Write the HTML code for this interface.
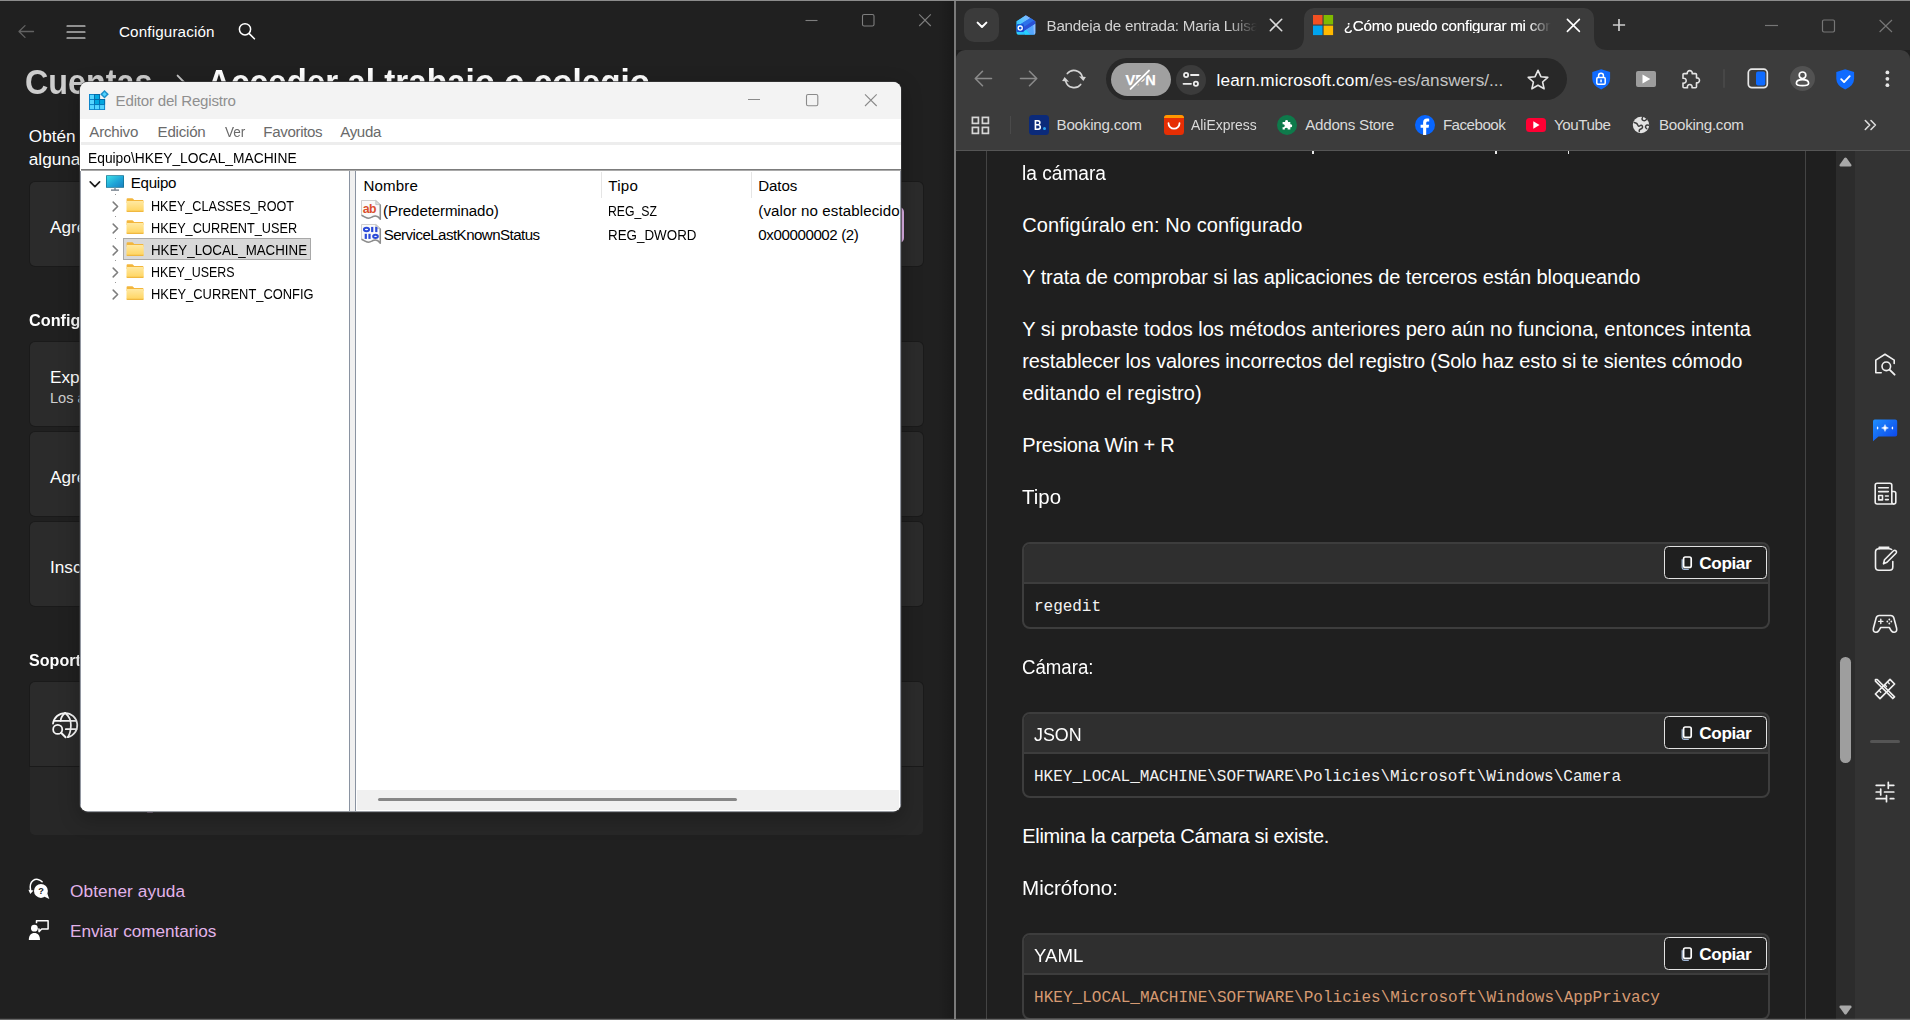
<!DOCTYPE html>
<html lang="es">
<head>
<meta charset="utf-8">
<title>Escritorio</title>
<style>
*{box-sizing:border-box;margin:0;padding:0}
html,body{width:1910px;height:1020px;overflow:hidden;background:#202020;font-family:"Liberation Sans",sans-serif;color:#fff}
.abs{position:absolute}
svg{display:block;overflow:visible}
.t{position:absolute;white-space:pre;line-height:1}
.layer{position:absolute;left:0;top:0;width:1910px;height:1020px}
#settings{clip-path:inset(0 956px 0 0);background:#202020}
#regshadow{position:absolute;left:80px;top:82px;width:821px;height:729.5px;border-radius:8px;box-shadow:0 0 0 1px rgba(58,58,60,.7),0 6px 20px 1px rgba(0,0,0,.26)}
#regedit{clip-path:inset(82px 1009px 208.5px 80px round 8px)}
#browser{clip-path:inset(0 0 0 956px)}
</style>
</head>
<body>
<!-- ============ SETTINGS WINDOW ============ -->
<div id="settings" class="layer">
<svg class="abs" style="left:16px;top:22px;" width="20" height="20" viewBox="0 0 20 20" ><path d="M17.5 9.5H3.2M9 3.6L3 9.5l6 5.9" fill="none" stroke="#626262" stroke-width="1.3" stroke-linecap="round" stroke-linejoin="round"/></svg>
<svg class="abs" style="left:66px;top:22px;" width="20" height="20" viewBox="0 0 20 20" ><path d="M1 4h18M1 10h18M1 16h18" fill="none" stroke="#fff" stroke-width="1.15" stroke-linecap="round"/></svg>
<div id="t0" class="t" style="left:119.00px;top:23.63px;font-size:15.2px;color:#fff;letter-spacing:0.148px;">Configuración</div>
<svg class="abs" style="left:236px;top:20px;" width="22" height="22" viewBox="0 0 22 22" ><circle cx="9" cy="9.3" r="5.6" fill="none" stroke="#fff" stroke-width="1.5"/><path d="M13.2 13.6l5.2 5.2" stroke="#fff" stroke-width="1.6" stroke-linecap="round"/></svg>
<svg class="abs" style="left:800px;top:8px;" width="140" height="24" viewBox="0 0 140 24" ><path d="M5.5 12.5h12" stroke="#7e7e7e" stroke-width="1.1"/><rect x="62.5" y="6.5" width="11.5" height="11.5" rx="1.6" fill="none" stroke="#7e7e7e" stroke-width="1.1"/><path d="M119.2 6.4l11.6 11.6M130.8 6.4l-11.6 11.6" stroke="#7e7e7e" stroke-width="1.1"/></svg>
<div id="t1" class="t" style="left:25.30px;top:63.57px;font-size:35px;color:#cdcdcd;font-weight:bold;transform-origin:0 0;transform:scaleX(0.9233);">Cuentas</div>
<svg class="abs" style="left:175px;top:73px;" width="14" height="22" viewBox="0 0 14 22" ><path d="M2.600 2.600l8.200 8.400-8.200 8.400" fill="none" stroke="#c6c6c6" stroke-width="1.9" stroke-linecap="round" stroke-linejoin="round"/></svg>
<div id="t2" class="t" style="left:207.00px;top:63.57px;font-size:35px;color:#fff;font-weight:bold;transform-origin:0 0;transform:scaleX(0.9490);">Acceder al trabajo o colegio</div>
<div id="t3" class="t" style="left:28.80px;top:127.84px;font-size:17.2px;color:#fff;max-width:840px;overflow:hidden;">Obtén acceso a recursos como el correo electrónico, las aplicaciones y la red.</div>
<div id="t4" class="t" style="left:28.80px;top:151.24px;font-size:17.2px;color:#fff;">algunas cosas de este dispositivo cuando te conectas.</div>
<div class="abs" style="left:30px;top:182px;width:893px;height:84px;background:#2b2b2b;border-radius:5px;box-shadow:0 0 0 1px rgba(0,0,0,.18);"></div>
<div id="t5" class="t" style="left:50.00px;top:218.74px;font-size:17.2px;color:#fff;">Agregar una cuenta profesional o educativa</div>
<div class="abs" style="left:810px;top:207px;width:93.5px;height:36px;background:#e0b2ea;border-radius:5px;"></div>
<div id="t6" class="t" style="left:28.90px;top:311.97px;font-size:17.4px;color:#fff;font-weight:bold;transform-origin:0 0;transform:scaleX(.935);">Configuración relacionada</div>
<div class="abs" style="left:30px;top:342px;width:893px;height:84px;background:#2b2b2b;border-radius:5px;box-shadow:0 0 0 1px rgba(0,0,0,.18);"></div>
<div id="t7" class="t" style="left:50.00px;top:368.74px;font-size:17.2px;color:#fff;">Exportar los archivos de registro de administración</div>
<div id="t8" class="t" style="left:50.00px;top:390.94px;font-size:14.6px;color:#cfcfcf;">Los archivos de registro se exportarán a C:\Users\Public\Documents\MDMDiagnostics</div>
<div class="abs" style="left:30px;top:432px;width:893px;height:84px;background:#2b2b2b;border-radius:5px;box-shadow:0 0 0 1px rgba(0,0,0,.18);"></div>
<div id="t9" class="t" style="left:50.00px;top:468.74px;font-size:17.2px;color:#fff;">Agregar o quitar un paquete de aprovisionamiento</div>
<div class="abs" style="left:30px;top:522px;width:893px;height:84px;background:#2b2b2b;border-radius:5px;box-shadow:0 0 0 1px rgba(0,0,0,.18);"></div>
<div id="t10" class="t" style="left:50.00px;top:558.74px;font-size:17.2px;color:#fff;">Inscribirse solo en la administración de dispositivos</div>
<div id="t11" class="t" style="left:28.90px;top:651.97px;font-size:17.4px;color:#fff;font-weight:bold;transform-origin:0 0;transform:scaleX(.925);">Soporte técnico relacionado</div>
<div class="abs" style="left:30px;top:682px;width:893px;height:84px;background:#2b2b2b;border-radius:5px;box-shadow:0 0 0 1px rgba(0,0,0,.18);border-bottom-left-radius:0;border-bottom-right-radius:0;"></div>
<div class="abs" style="left:30px;top:767px;width:893px;height:68px;background:#272727;border-radius:0 0 5px 5px;"></div>
<svg class="abs" style="left:51px;top:712px;" width="28" height="28" viewBox="0 0 28 28" ><g fill="none" stroke="#f6f6f6" stroke-width="1.750" stroke-linecap="round"><path d="M2 11.600A12.200 12.200 0 1 1 17 25.050"/><path d="M3.300 8.800H25.200M14.800 17.200H25.600"/><path d="M14.100 1C18 4 20 9 19.900 13.200S18.600 22.500 16.900 25.200"/><path d="M14.100 1C11.500 3 9.900 6 9.600 8.800"/><circle cx="6.700" cy="17.400" r="4.550"/><path d="M10.100 20.800L14.600 25.300" stroke-width="2"/></g></svg>
<div id="t12" class="t" style="left:98.00px;top:716.74px;font-size:17.2px;color:#fff;">Ayuda con Acceder al trabajo o colegio</div>
<svg class="abs" style="left:28px;top:878px;" width="22" height="22" viewBox="0 0 22 22" ><path d="M14.100 3.800C12 1.200 8 .400 5 2.600C2.400 4.600 1.800 8.500 2.600 12.300" fill="none" stroke="#fff" stroke-width="1.500" stroke-linecap="round"/><path d="M.400 11.700L5.500 12.500L2.300 15.900Z" fill="#fff"/><circle cx="12.950" cy="12.950" r="6.950" fill="#fff"/><path d="M16 18.600L21.300 20.900L19.400 15.800Z" fill="#fff"/><text x="12.950" y="16.300" font-family="Liberation Sans" font-weight="bold" font-size="9.200" text-anchor="middle" fill="#202020">?</text></svg>
<div id="t13" class="t" style="left:70.10px;top:882.64px;font-size:17.2px;color:#e2b3ea;letter-spacing:0.107px;">Obtener ayuda</div>
<svg class="abs" style="left:28px;top:919px;" width="22" height="22" viewBox="0 0 22 22" ><circle cx="6.400" cy="9.200" r="3.400" fill="#fff"/><path d="M.800 20.900c0-4.400 2.200-7 5.600-7s5.600 2.600 5.600 7z" fill="#fff"/><path d="M8.500 4.300V1.800H20.100V10H13.700L11 12.600V10H10.300" fill="none" stroke="#fff" stroke-width="1.500" stroke-linejoin="round"/></svg>
<div id="t14" class="t" style="left:70.10px;top:923.44px;font-size:17.2px;color:#e2b3ea;letter-spacing:-0.053px;">Enviar comentarios</div>
<div class="abs" style="left:146.5px;top:811.5px;width:6px;height:1.8px;background:#d9addf;border-radius:1px;"></div>
<div class="abs" style="left:938px;top:1px;width:16px;height:1018px;background:linear-gradient(90deg,rgba(0,0,0,0),rgba(0,0,0,.2));"></div>
</div>
<!-- ============ REGISTRY EDITOR ============ -->
<div id="regshadow"></div>
<div id="regedit" class="layer">
<div class="abs" style="left:80px;top:82px;width:821px;height:729.5px;background:#fff;"></div>
<div class="abs" style="left:80px;top:82px;width:821px;height:36.7px;background:#f3f3f3;"></div>
<svg class="abs" style="left:89px;top:94px;" width="16" height="16" viewBox="0 0 16 16" ><path d="M0 0H11.050V5.050H16.100V16.100H0Z" fill="#0b82c8"/><path d="M5.050 0H11.050V5.050H16.100V10.600H5.050Z" fill="#0569a6"/><rect x="0.95" y="0.95" width="4.1" height="4.1" fill="#56d5ff"/><rect x="6.00" y="0.95" width="4.1" height="4.1" fill="#02a7e0"/><rect x="0.95" y="6.00" width="4.1" height="4.1" fill="#56d5ff"/><rect x="6.00" y="6.00" width="4.1" height="4.1" fill="#02a7e0"/><rect x="11.05" y="6.00" width="4.1" height="4.1" fill="#02a7e0"/><rect x="0.95" y="11.05" width="4.1" height="4.1" fill="#56d5ff"/><rect x="6.00" y="11.05" width="4.1" height="4.1" fill="#56d5ff"/><rect x="11.05" y="11.05" width="4.1" height="4.1" fill="#56d5ff"/><path d="M15.500 -4L19.800 0.300L15.500 4.600L11.200 0.300Z" fill="#1d8fca"/><path d="M15.500 -1.900L17.700 0.300L15.500 2.500L13.300 0.300Z" fill="#50d3ff"/></svg>
<div id="t15" class="t" style="left:115.60px;top:93.02px;font-size:15.1px;color:#8f8f8f;letter-spacing:-0.210px;">Editor del Registro</div>
<svg class="abs" style="left:740px;top:88px;" width="145" height="24" viewBox="0 0 145 24" ><path d="M8 11.500h12" stroke="#8a8a8a" stroke-width="1.1"/><rect x="66.500" y="6.500" width="11.300" height="11.300" rx="1.500" fill="none" stroke="#8a8a8a" stroke-width="1.1"/><path d="M125 6.300l11.700 11.700M136.700 6.300l-11.700 11.700" stroke="#8a8a8a" stroke-width="1.1"/></svg>
<div id="t16" class="t" style="left:89.30px;top:123.82px;font-size:15.1px;color:#6a6a6a;letter-spacing:-0.224px;">Archivo</div>
<div id="t17" class="t" style="left:157.60px;top:123.82px;font-size:15.1px;color:#6a6a6a;letter-spacing:-0.236px;">Edición</div>
<div id="t18" class="t" style="left:224.50px;top:123.82px;font-size:15.1px;color:#6a6a6a;transform-origin:0 0;transform:scaleX(0.9004);">Ver</div>
<div id="t19" class="t" style="left:263.30px;top:123.82px;font-size:15.1px;color:#6a6a6a;letter-spacing:-0.347px;">Favoritos</div>
<div id="t20" class="t" style="left:340.30px;top:123.82px;font-size:15.1px;color:#6a6a6a;letter-spacing:-0.383px;">Ayuda</div>
<div class="abs" style="left:81px;top:142px;width:820px;height:3px;background:#ededed;"></div>
<div id="t21" class="t" style="left:87.90px;top:149.82px;font-size:15.1px;color:#000;transform-origin:0 0;transform:scaleX(0.9142);">Equipo\HKEY_LOCAL_MACHINE</div>
<div class="abs" style="left:81px;top:169px;width:820px;height:1px;background:#7c7c7c;"></div>
<div class="abs" style="left:81px;top:170px;width:820px;height:1px;background:#a9a9a9;"></div>
<div class="abs" style="left:349px;top:171px;width:1px;height:640px;background:#8a93a1;"></div>
<div class="abs" style="left:350px;top:171px;width:5px;height:640px;background:#f0f0f0;"></div>
<div class="abs" style="left:355px;top:171px;width:1px;height:640px;background:#8a93a1;"></div>
<svg class="abs" style="left:115px;top:194px;" width="1" height="90" viewBox="0 0 1 90" ><rect x="0" y="0" width="1" height="1" fill="#9a9a9a"/><rect x="0" y="22" width="1" height="1" fill="#9a9a9a"/><rect x="0" y="44" width="1" height="1" fill="#9a9a9a"/><rect x="0" y="66" width="1" height="1" fill="#9a9a9a"/><rect x="0" y="88" width="1" height="1" fill="#9a9a9a"/></svg>
<svg class="abs" style="left:89px;top:180px;" width="12" height="9" viewBox="0 0 12 9" ><path d="M1.200 1.800L5.900 6.600L10.600 1.800" fill="none" stroke="#1c1c1c" stroke-width="1.65" stroke-linecap="round" stroke-linejoin="round"/></svg>
<svg class="abs" style="left:106px;top:175px;" width="18" height="17" viewBox="0 0 18 17" ><defs><linearGradient id="mg" x1="0" y1="0" x2="1" y2="1"><stop offset="0" stop-color="#3fe0e8"/><stop offset=".55" stop-color="#1fa6d8"/><stop offset="1" stop-color="#1a7fc0"/></linearGradient></defs><rect x="0" y="0.200" width="18" height="12.600" rx="0.600" fill="#12708f"/><rect x="0.700" y="0.900" width="16.600" height="11.200" fill="url(#mg)"/><rect x="8" y="12.800" width="2" height="2" fill="#9aa7b3"/><rect x="5" y="14.500" width="8" height="1.200" fill="#5e6b78"/></svg>
<div id="t22" class="t" style="left:130.80px;top:175.42px;font-size:15.1px;color:#000;letter-spacing:-0.280px;">Equipo</div>
<div class="abs" style="left:123px;top:238px;width:188px;height:22px;background:#d9d9d9;border:1px solid #a8a8a8;"></div>
<svg class="abs" style="left:112px;top:201.0px;" width="7" height="11" viewBox="0 0 7 11" ><path d="M1.200 1.100L5.600 5.500L1.200 9.900" fill="none" stroke="#7e7e7e" stroke-width="1.55" stroke-linecap="round" stroke-linejoin="round"/></svg>
<svg class="abs" style="left:126px;top:198.0px;" width="18" height="14" viewBox="0 0 18 14" ><defs><linearGradient id="fg0" x1="0" y1="0" x2="0" y2="1"><stop offset="0" stop-color="#ffe9a2"/><stop offset="1" stop-color="#ffd45e"/></linearGradient></defs><path d="M0.6 1.2Q0.6 0.3 1.5 0.3H6.2Q6.9 0.3 7.3 0.9L8.2 2.1H16.6Q17.5 2.1 17.5 3V5H0.6Z" fill="#f3b63c"/><rect x="0.5" y="3" width="17.2" height="10.8" rx="0.9" fill="url(#fg0)"/><path d="M0.5 12.800h17.200v.300q0 .800-.900.800H1.400q-.900 0-.900-.800z" fill="#f0b840"/></svg>
<div id="t23" class="t" style="left:150.80px;top:197.72px;font-size:15.1px;color:#000;transform-origin:0 0;transform:scaleX(0.8356);">HKEY_CLASSES_ROOT</div>
<svg class="abs" style="left:112px;top:223.0px;" width="7" height="11" viewBox="0 0 7 11" ><path d="M1.200 1.100L5.600 5.500L1.200 9.900" fill="none" stroke="#7e7e7e" stroke-width="1.55" stroke-linecap="round" stroke-linejoin="round"/></svg>
<svg class="abs" style="left:126px;top:220.0px;" width="18" height="14" viewBox="0 0 18 14" ><defs><linearGradient id="fg1" x1="0" y1="0" x2="0" y2="1"><stop offset="0" stop-color="#ffe9a2"/><stop offset="1" stop-color="#ffd45e"/></linearGradient></defs><path d="M0.6 1.2Q0.6 0.3 1.5 0.3H6.2Q6.9 0.3 7.3 0.9L8.2 2.1H16.6Q17.5 2.1 17.5 3V5H0.6Z" fill="#f3b63c"/><rect x="0.5" y="3" width="17.2" height="10.8" rx="0.9" fill="url(#fg1)"/><path d="M0.5 12.800h17.200v.300q0 .800-.900.800H1.400q-.900 0-.900-.800z" fill="#f0b840"/></svg>
<div id="t24" class="t" style="left:150.80px;top:219.72px;font-size:15.1px;color:#000;transform-origin:0 0;transform:scaleX(0.8420);">HKEY_CURRENT_USER</div>
<svg class="abs" style="left:112px;top:245.0px;" width="7" height="11" viewBox="0 0 7 11" ><path d="M1.200 1.100L5.600 5.500L1.200 9.900" fill="none" stroke="#7e7e7e" stroke-width="1.55" stroke-linecap="round" stroke-linejoin="round"/></svg>
<svg class="abs" style="left:126px;top:242.0px;" width="18" height="14" viewBox="0 0 18 14" ><defs><linearGradient id="fg2" x1="0" y1="0" x2="0" y2="1"><stop offset="0" stop-color="#ffe9a2"/><stop offset="1" stop-color="#ffd45e"/></linearGradient></defs><path d="M0.6 1.2Q0.6 0.3 1.5 0.3H6.2Q6.9 0.3 7.3 0.9L8.2 2.1H16.6Q17.5 2.1 17.5 3V5H0.6Z" fill="#f3b63c"/><rect x="0.5" y="3" width="17.2" height="10.8" rx="0.9" fill="url(#fg2)"/><path d="M0.5 12.800h17.200v.300q0 .800-.900.800H1.400q-.900 0-.900-.800z" fill="#f0b840"/></svg>
<div id="t25" class="t" style="left:150.80px;top:241.72px;font-size:15.1px;color:#000;transform-origin:0 0;transform:scaleX(0.8814);">HKEY_LOCAL_MACHINE</div>
<svg class="abs" style="left:112px;top:267.0px;" width="7" height="11" viewBox="0 0 7 11" ><path d="M1.200 1.100L5.600 5.500L1.200 9.900" fill="none" stroke="#7e7e7e" stroke-width="1.55" stroke-linecap="round" stroke-linejoin="round"/></svg>
<svg class="abs" style="left:126px;top:264.0px;" width="18" height="14" viewBox="0 0 18 14" ><defs><linearGradient id="fg3" x1="0" y1="0" x2="0" y2="1"><stop offset="0" stop-color="#ffe9a2"/><stop offset="1" stop-color="#ffd45e"/></linearGradient></defs><path d="M0.6 1.2Q0.6 0.3 1.5 0.3H6.2Q6.9 0.3 7.3 0.9L8.2 2.1H16.6Q17.5 2.1 17.5 3V5H0.6Z" fill="#f3b63c"/><rect x="0.5" y="3" width="17.2" height="10.8" rx="0.9" fill="url(#fg3)"/><path d="M0.5 12.800h17.200v.300q0 .800-.900.800H1.400q-.900 0-.900-.800z" fill="#f0b840"/></svg>
<div id="t26" class="t" style="left:150.80px;top:263.72px;font-size:15.1px;color:#000;transform-origin:0 0;transform:scaleX(0.8236);">HKEY_USERS</div>
<svg class="abs" style="left:112px;top:289.0px;" width="7" height="11" viewBox="0 0 7 11" ><path d="M1.200 1.100L5.600 5.500L1.200 9.900" fill="none" stroke="#7e7e7e" stroke-width="1.55" stroke-linecap="round" stroke-linejoin="round"/></svg>
<svg class="abs" style="left:126px;top:286.0px;" width="18" height="14" viewBox="0 0 18 14" ><defs><linearGradient id="fg4" x1="0" y1="0" x2="0" y2="1"><stop offset="0" stop-color="#ffe9a2"/><stop offset="1" stop-color="#ffd45e"/></linearGradient></defs><path d="M0.6 1.2Q0.6 0.3 1.5 0.3H6.2Q6.9 0.3 7.3 0.9L8.2 2.1H16.6Q17.5 2.1 17.5 3V5H0.6Z" fill="#f3b63c"/><rect x="0.5" y="3" width="17.2" height="10.8" rx="0.9" fill="url(#fg4)"/><path d="M0.5 12.800h17.200v.300q0 .800-.900.800H1.400q-.900 0-.900-.800z" fill="#f0b840"/></svg>
<div id="t27" class="t" style="left:150.80px;top:285.72px;font-size:15.1px;color:#000;transform-origin:0 0;transform:scaleX(0.8541);">HKEY_CURRENT_CONFIG</div>
<div class="abs" style="left:601px;top:172px;width:1px;height:26px;background:#e5e5e5;"></div>
<div class="abs" style="left:751px;top:172px;width:1px;height:26px;background:#e5e5e5;"></div>
<div id="t28" class="t" style="left:363.50px;top:177.62px;font-size:15.1px;color:#000;letter-spacing:0.142px;">Nombre</div>
<div id="t29" class="t" style="left:608.30px;top:177.62px;font-size:15.1px;color:#000;letter-spacing:0.229px;">Tipo</div>
<div id="t30" class="t" style="left:758.30px;top:177.62px;font-size:15.1px;color:#000;letter-spacing:-0.109px;">Datos</div>
<svg class="abs" style="left:361px;top:200px;" width="20" height="20" viewBox="0 0 20 20" ><path d="M0.500 0.500H14.800L19.300 4.600L19.300 19.200C17.500 16.800 15.300 15.600 13 16.300C10.800 17 9.500 18.300 7.300 18.200C4.800 18.100 3 16.300 0.500 15.300Z" fill="#fafafa" stroke="#c9c9c9" stroke-width="0.9"/><path d="M14.800 0.500V4.600H19.300Z" fill="#dedede" stroke="#b5b5b5" stroke-width="0.7"/><path d="M19.300 4.600L19.300 19.200C17.500 16.800 15.300 15.600 13 16.300C10.800 17 9.500 18.300 7.300 18.200C4.800 18.100 3 16.300 0.500 15.300" fill="none" stroke="#8d8d8d" stroke-width="1.5" stroke-linejoin="round"/><text x="1.700" y="12.700" font-family="Liberation Sans" font-weight="bold" font-size="12.300" fill="#da4f2d" letter-spacing="-0.45">ab</text></svg>
<svg class="abs" style="left:361px;top:224px;" width="20" height="20" viewBox="0 0 20 20" ><path d="M0.500 0.500H14.800L19.300 4.600L19.300 19.200C17.500 16.800 15.300 15.600 13 16.300C10.800 17 9.500 18.300 7.300 18.200C4.800 18.100 3 16.300 0.500 15.300Z" fill="#fafafa" stroke="#c9c9c9" stroke-width="0.9"/><path d="M14.800 0.500V4.600H19.300Z" fill="#dedede" stroke="#b5b5b5" stroke-width="0.7"/><path d="M19.300 4.600L19.300 19.200C17.500 16.800 15.300 15.600 13 16.300C10.800 17 9.500 18.300 7.300 18.200C4.800 18.100 3 16.300 0.500 15.300" fill="none" stroke="#8d8d8d" stroke-width="1.5" stroke-linejoin="round"/><g transform="translate(0,-4.700)"><g fill="none" stroke="#2b4ad8" stroke-width="1.9"><ellipse cx="5.500" cy="10.200" rx="2.600" ry="1.750"/><ellipse cx="14.500" cy="17.050" rx="2.400" ry="1.650"/></g><g fill="#2b4ad8"><rect x="10.100" y="7.600" width="2.200" height="5.200"/><rect x="14.200" y="7.600" width="2.200" height="5.200"/><rect x="3.700" y="14.500" width="2.200" height="5.100"/><rect x="7.400" y="14.500" width="2.200" height="5.100"/></g></g></svg>
<div id="t31" class="t" style="left:383.10px;top:202.72px;font-size:15.1px;color:#000;letter-spacing:-0.124px;">(Predeterminado)</div>
<div id="t32" class="t" style="left:383.70px;top:226.72px;font-size:15.1px;color:#000;letter-spacing:-0.539px;">ServiceLastKnownStatus</div>
<div id="t33" class="t" style="left:608.30px;top:202.72px;font-size:15.1px;color:#000;transform-origin:0 0;transform:scaleX(0.8114);">REG_SZ</div>
<div id="t34" class="t" style="left:608.30px;top:226.72px;font-size:15.1px;color:#000;transform-origin:0 0;transform:scaleX(0.8868);">REG_DWORD</div>
<div class="abs" style="left:750px;top:200px;width:149.500px;height:24px;overflow:hidden"><div id="t35" class="t" style="left:8.30px;top:2.72px;font-size:15.1px;color:#000;letter-spacing:0.104px;">(valor no establecido)</div></div>
<div id="t36" class="t" style="left:758.30px;top:226.72px;font-size:15.1px;color:#000;letter-spacing:-0.404px;">0x00000002 (2)</div>
<div class="abs" style="left:900px;top:171px;width:1px;height:640px;background:#9297a1;"></div>
<div class="abs" style="left:80px;top:171px;width:1px;height:640px;background:#9297a1;"></div>
<div class="abs" style="left:357px;top:790px;width:541.5px;height:19.5px;background:#f0f0f0;"></div>
<div class="abs" style="left:80px;top:810.5px;width:821px;height:1px;background:#9aa2ad;"></div>
<div class="abs" style="left:378px;top:798px;width:359px;height:3px;background:#868686;border-radius:1.5px;"></div>
</div>
<div class="abs" style="left:954px;top:0;width:2px;height:1020px;background:#7a7a7a"></div>
<!-- ============ BROWSER ============ -->
<div id="browser" class="layer">
<div class="abs" style="left:956px;top:0px;width:954px;height:50px;background:#2b2b2b;"></div>
<div class="abs" style="left:956px;top:50px;width:954px;height:100px;background:#3c3c3c;border-radius:9px 9px 0 0;"></div>
<div class="abs" style="left:956px;top:150px;width:954px;height:1px;background:#555;"></div>
<div class="abs" style="left:964px;top:8px;width:35px;height:34px;background:#3b3b3b;border-radius:10px;"></div>
<svg class="abs" style="left:976px;top:20px;" width="12" height="10" viewBox="0 0 12 10" ><path d="M1.600 2.600L6 7L10.400 2.600" fill="none" stroke="#fff" stroke-width="2" stroke-linecap="round" stroke-linejoin="round"/></svg>
<svg class="abs" style="left:1016px;top:15px;" width="20" height="20" viewBox="0 0 20 20" ><defs><linearGradient id="ol1" x1="0" y1="1" x2="1" y2="0.300"><stop offset="0" stop-color="#2fd8ff"/><stop offset=".55" stop-color="#1fa8ff"/><stop offset="1" stop-color="#7fb2ff"/></linearGradient><linearGradient id="ol2" x1="0" y1="0.700" x2="1" y2="0"><stop offset="0" stop-color="#35c9ff"/><stop offset=".6" stop-color="#6fc0ff"/><stop offset="1" stop-color="#8f9dff"/></linearGradient><linearGradient id="ol3" x1="0" y1="0" x2="1" y2="1"><stop offset="0" stop-color="#0f6fe6"/><stop offset="1" stop-color="#1b38c4"/></linearGradient><clipPath id="olc"><path d="M9.800 .200L19.300 6.200V18Q19.300 19.700 17.600 19.700H2.400Q.500 19.700 .500 17.800V6.200Z"/></clipPath></defs><g clip-path="url(#olc)"><rect width="20" height="20" fill="url(#ol1)"/><path d="M9.800 .200L.500 6.200V12L15.500 2.800Z" fill="url(#ol2)"/><path d="M15.200 2.600L19.600 6V8.800L8 16.200V11.800L2 10.800Z" fill="#2a52d6"/><path d="M15.200 2.600L2 10.800L8 11.800L19 4.800Z" fill="#2f7df0" opacity=".75"/><path d="M19.600 8.800L10 14.800L14.500 19.700H19.600Z" fill="#55a6ff"/><path d="M17.300 10.300L19.600 8.800V19.700H18Z" fill="#9cc3ff" opacity=".8"/><path d="M10 14.800L8 16.200L9 19.700H14.500Z" fill="#27d3ff"/></g><rect x=".300" y="9" width="7.700" height="8.100" rx="1.500" fill="url(#ol3)"/><circle cx="4.200" cy="13" r="2.050" fill="none" stroke="#fff" stroke-width="1.350"/></svg>
<div id="t37" class="t" style="left:1046.50px;top:17.83px;font-size:15.2px;color:#d2d2d2;letter-spacing:-0.234px;-webkit-mask-image:linear-gradient(90deg,#000 86%,transparent 99%);mask-image:linear-gradient(90deg,#000 86%,transparent 99%);">Bandeja de entrada: Maria Luisa</div>
<svg class="abs" style="left:1269px;top:18px;" width="14" height="14" viewBox="0 0 14 14" ><path d="M1.300 1.300l11.400 11.400M12.700 1.300L1.300 12.700" stroke="#dcdcdc" stroke-width="1.600" stroke-linecap="round"/></svg>
<div class="abs" style="left:1304px;top:8px;width:289.5px;height:42px;background:#3c3c3c;border-radius:10px 10px 0 0;"></div>
<svg class="abs" style="left:1290px;top:36px;" width="14" height="14" viewBox="0 0 14 14" ><path d="M14 0V14H0Q14 14 14 0Z" fill="#3c3c3c"/></svg>
<svg class="abs" style="left:1593.5px;top:36px;" width="14" height="14" viewBox="0 0 14 14" ><path d="M0 0V14H14Q0 14 0 0Z" fill="#3c3c3c"/></svg>
<svg class="abs" style="left:1313px;top:15px;" width="20" height="20" viewBox="0 0 20 20" ><rect x="0" y="0" width="9.500" height="9.500" fill="#f25022"/><rect x="10.600" y="0" width="9.500" height="9.500" fill="#7fba00"/><rect x="0" y="10.600" width="9.500" height="9.500" fill="#00a4ef"/><rect x="10.600" y="10.600" width="9.500" height="9.500" fill="#ffb900"/></svg>
<div id="t38" class="t" style="left:1343.70px;top:18.13px;font-size:15.2px;color:#fff;letter-spacing:-0.248px;-webkit-mask-image:linear-gradient(90deg,#000 88%,transparent 99%);mask-image:linear-gradient(90deg,#000 88%,transparent 99%);text-shadow:0 0 .5px rgba(255,255,255,.6);">¿Cómo puedo configurar mi con</div>
<svg class="abs" style="left:1566px;top:18px;" width="15" height="15" viewBox="0 0 15 15" ><path d="M1.400 1.400l12 12M13.400 1.400l-12 12" stroke="#fff" stroke-width="1.600" stroke-linecap="round"/></svg>
<svg class="abs" style="left:1611px;top:17px;" width="16" height="16" viewBox="0 0 16 16" ><path d="M8 1.900v12.200M1.900 8h12.200" stroke="#cdcdcd" stroke-width="1.700" stroke-linecap="butt"/></svg>
<svg class="abs" style="left:1760px;top:14px;" width="140" height="24" viewBox="0 0 140 24" ><path d="M5 11.500h13" stroke="#767676" stroke-width="1.200"/><rect x="62.500" y="6" width="12" height="12" rx="1.400" fill="none" stroke="#767676" stroke-width="1.200"/><path d="M119.600 6l12.400 12M132 6l-12.400 12" stroke="#767676" stroke-width="1.200"/></svg>
<svg class="abs" style="left:973px;top:69px;" width="20" height="20" viewBox="0 0 20 20" ><path d="M18.500 9.500H2.500M9.500 2.300L2.300 9.500l7.200 7.200" fill="none" stroke="#8a8a8a" stroke-width="1.600" stroke-linecap="round" stroke-linejoin="round"/></svg>
<svg class="abs" style="left:1019px;top:69px;" width="20" height="20" viewBox="0 0 20 20" ><path d="M1.500 9.500H17.500M10.500 2.300L17.700 9.500l-7.200 7.200" fill="none" stroke="#8a8a8a" stroke-width="1.600" stroke-linecap="round" stroke-linejoin="round"/></svg>
<svg class="abs" style="left:1061.6px;top:66.6px;" width="24" height="24" viewBox="0 0 24 24" ><g fill="none" stroke="#d4d4d4" stroke-width="1.600" stroke-linecap="round"><path d="M5.300 6.600A8.600 8.600 0 0 1 20.300 9.800"/><path d="M18.700 17.400A8.600 8.600 0 0 1 3.700 14.200"/></g><path d="M17 9.200L23.900 10L21.400 14Z" fill="#d4d4d4"/><path d="M7 14.800L.100 14L2.600 10Z" fill="#d4d4d4"/></svg>
<div class="abs" style="left:1106px;top:58px;width:461px;height:42px;background:#282828;border-radius:21px;"></div>
<div class="abs" style="left:1111px;top:63px;width:60px;height:33px;background:#a0a0a0;border-radius:16.5px;"></div>
<div id="t39" class="t" style="left:1125.40px;top:72.63px;font-size:14.5px;color:#fff;font-weight:bold;letter-spacing:0.236px;-webkit-text-stroke:.25px #fff;">VPN</div>
<svg class="abs" style="left:1128px;top:68px;" width="26" height="24" viewBox="0 0 26 24" ><path d="M2.600 20.900L21 2.600" stroke="#a0a0a0" stroke-width="4.400" stroke-linecap="round"/><path d="M2.600 20.900L21 2.600" stroke="#fff" stroke-width="1.900" stroke-linecap="round"/></svg>
<div class="abs" style="left:1176px;top:64.5px;width:30px;height:30px;background:#3b3b3b;border-radius:15px;"></div>
<svg class="abs" style="left:1182px;top:71px;" width="18" height="17" viewBox="0 0 18 17" ><g fill="none" stroke="#ececec" stroke-width="1.800" stroke-linecap="round"><circle cx="4.100" cy="4" r="2.100"/><path d="M9 4h7.500"/><circle cx="13.900" cy="12.800" r="2.100"/><path d="M1.500 12.800h7.500"/></g></svg>
<div id="t40" class="t" style="left:1216.50px;top:72.04px;font-size:17.2px;color:#fff;letter-spacing:0.130px;">learn.microsoft.com</div>
<div id="t41" class="t" style="left:1369.30px;top:72.04px;font-size:17.2px;color:#c4c4c4;letter-spacing:-0.040px;">/es-es/answers/...</div>
<svg class="abs" style="left:1526px;top:68px;" width="24" height="24" viewBox="0 0 24 24" ><path d="M12 2.300l2.900 6.400 6.900.700-5.200 4.600 1.500 6.800L12 17.300l-6.100 3.500 1.500-6.800L2.200 9.400l6.900-.700z" fill="none" stroke="#e6e6e6" stroke-width="1.600" stroke-linejoin="round"/></svg>
<svg class="abs" style="left:1591.5px;top:68.8px;" width="19" height="21" viewBox="0 0 19 21" ><path d="M9.200 0.300L18.100 3.100V9.800Q18.100 16.600 9.200 20.600Q0.300 16.600 0.300 9.800V3.100Z" fill="#0f6bff"/><rect x="4.800" y="8.600" width="8.400" height="6.600" rx="1.100" fill="none" stroke="#fff" stroke-width="1.500"/><path d="M6.600 8.400V6.600a2.400 2.400 0 0 1 4.800 0v1.800" fill="none" stroke="#fff" stroke-width="1.500"/><rect x="8.300" y="10.500" width="1.500" height="2.800" fill="#fff"/></svg>
<div class="abs" style="left:1635.5px;top:70.7px;width:20.5px;height:16.5px;background:#9d9d9d;border-radius:2px;"></div>
<svg class="abs" style="left:1642px;top:74px;" width="9" height="10" viewBox="0 0 9 10" ><path d="M0.500 0.400L8.300 5L0.500 9.600Z" fill="#fff"/></svg>
<svg class="abs" style="left:1679.3px;top:69px;" width="22" height="22" viewBox="0 0 22 22" ><path d="M8.300 4.600a2.500 2.500 0 1 1 4.900 0h3.300q1 0 1 1v3.300a2.500 2.500 0 1 1 0 4.900v3.900q0 1-1 1h-3.500a2.400 2.400 0 1 0-4.500 0H5q-1 0-1-1v-3.600a2.500 2.500 0 1 0 0-4.800V5.600q0-1 1-1z" fill="none" stroke="#e2e2e2" stroke-width="1.600" stroke-linejoin="round"/></svg>
<div class="abs" style="left:1722.5px;top:69px;width:2px;height:19px;background:#474747;border-radius:1px;"></div>
<svg class="abs" style="left:1747px;top:68px;" width="22" height="21" viewBox="0 0 22 21" ><rect x="1.300" y="1.200" width="19" height="18.400" rx="3.600" fill="none" stroke="#e8e8e8" stroke-width="1.700"/><rect x="9" y="3.400" width="9.300" height="14" rx="2" fill="#0f6bff"/></svg>
<div class="abs" style="left:1790px;top:66px;width:25px;height:25px;background:#525252;border-radius:50%;"></div>
<svg class="abs" style="left:1794px;top:70px;" width="17" height="17" viewBox="0 0 17 17" ><circle cx="8.500" cy="5.300" r="3.300" fill="none" stroke="#fff" stroke-width="1.700"/><path d="M2.400 13.200c0-2.400 2.600-3.600 6.100-3.600s6.100 1.200 6.100 3.600c0 1.500-2.800 2.400-6.100 2.400s-6.100-.900-6.100-2.400z" fill="none" stroke="#fff" stroke-width="1.700"/></svg>
<svg class="abs" style="left:1835.7px;top:68.5px;" width="19" height="21" viewBox="0 0 19 21" ><path d="M9.200 0.300L18.100 3.100V9.800Q18.100 16.600 9.200 20.600Q0.300 16.600 0.300 9.800V3.100Z" fill="#0f6bff"/><path d="M5.200 10.200l2.900 2.900 5.600-5.900" fill="none" stroke="#fff" stroke-width="1.900" stroke-linecap="round" stroke-linejoin="round"/></svg>
<svg class="abs" style="left:1885px;top:70px;" width="5" height="18" viewBox="0 0 5 18" ><circle cx="2.400" cy="2.400" r="1.900" fill="#e6e6e6"/><circle cx="2.400" cy="8.800" r="1.900" fill="#e6e6e6"/><circle cx="2.400" cy="15.200" r="1.900" fill="#e6e6e6"/></svg>
<svg class="abs" style="left:971px;top:116px;" width="19" height="19" viewBox="0 0 19 19" ><g fill="none" stroke="#d6d6d6" stroke-width="1.700"><rect x="1.400" y="1.400" width="6" height="6"/><rect x="11.400" y="1.400" width="6" height="6"/><rect x="1.400" y="11.400" width="6" height="6"/><rect x="11.400" y="11.400" width="6" height="6"/></g></svg>
<div class="abs" style="left:1010px;top:116px;width:1px;height:18px;background:#4a4a4a;"></div>
<div class="abs" style="left:1029px;top:115px;width:20px;height:20px;background:#0b2a7a;border-radius:3.500px;"></div>
<div id="t42" class="t" style="left:1033.90px;top:117.84px;font-size:14.6px;color:#fff;font-weight:bold;transform-origin:0 0;transform:scaleX(0.7111);">B</div>
<div class="abs" style="left:1043.3px;top:127.1px;width:3px;height:3px;background:#2ba3f0;border-radius:50%;"></div>
<div id="t43" class="t" style="left:1056.50px;top:116.73px;font-size:15.2px;color:#dadada;letter-spacing:-0.230px;">Booking.com</div>
<div class="abs" style="left:1164px;top:115px;width:20px;height:20px;background:#e62e04;border-radius:3.500px;"></div>
<div class="abs" style="left:1164px;top:115px;width:20px;height:3px;background:#ff9800;border-radius:3.500px 3.500px 0 0;"></div>
<svg class="abs" style="left:1167px;top:122px;" width="14" height="8" viewBox="0 0 14 8" ><path d="M1.500 1.200a5.500 5.500 0 0 0 11 0" fill="none" stroke="#fff" stroke-width="1.800" stroke-linecap="round"/></svg>
<div id="t44" class="t" style="left:1191.30px;top:116.73px;font-size:15.2px;color:#dadada;transform-origin:0 0;transform:scaleX(0.9157);">AliExpress</div>
<div class="abs" style="left:1277px;top:115px;width:20px;height:20px;background:#0e7a4b;border-radius:50%;"></div>
<svg class="abs" style="left:1281px;top:119px;" width="12" height="12" viewBox="0 0 12 12" ><path d="M4.100 2.900a1.500 1.500 0 1 1 2.900 0h2.300v2.400a1.500 1.500 0 1 1 0 2.900v2.400H6.600a1.400 1.400 0 1 0-2.600 0H1.600V8a1.500 1.500 0 1 0 0-2.700V2.900z" fill="#fff"/></svg>
<div id="t45" class="t" style="left:1305.20px;top:116.73px;font-size:15.2px;color:#dadada;letter-spacing:-0.266px;">Addons Store</div>
<div class="abs" style="left:1415px;top:115px;width:20px;height:20px;background:#0866ff;border-radius:50%;"></div>
<svg class="abs" style="left:1415px;top:115px;" width="20" height="20" viewBox="0 0 20 20" ><path d="M11.200 20V12.700h2.400l.500-3h-2.900V8c0-.900.400-1.600 1.700-1.600h1.300V3.800c-.600-.100-1.400-.200-2.200-.200-2.400 0-3.900 1.400-3.900 4v2.100H5.600v3h2.500V20z" fill="#fff"/></svg>
<div id="t46" class="t" style="left:1442.90px;top:116.73px;font-size:15.2px;color:#dadada;letter-spacing:-0.543px;">Facebook</div>
<div class="abs" style="left:1526px;top:118px;width:20px;height:14px;background:#ff0033;border-radius:3.500px;"></div>
<svg class="abs" style="left:1533px;top:121px;" width="7" height="8" viewBox="0 0 7 8" ><path d="M0.300 0.300L6.500 4L0.300 7.700Z" fill="#fff"/></svg>
<div id="t47" class="t" style="left:1554.00px;top:116.73px;font-size:15.2px;color:#dadada;letter-spacing:-0.448px;">YouTube</div>
<svg class="abs" style="left:1631px;top:115px;" width="20" height="20" viewBox="0 0 20 20" ><circle cx="10" cy="10" r="8.200" fill="#e4e4e4"/><path d="M3.200 7.500c2 .300 3.200 1.200 3.600 2.600.300 1.300 1.400 1.300 2.200.600.900-.800 2-.500 2.400.500.500 1.200-.300 2.400-1.700 2.800-1.300.400-1.600 1.300-1.400 2.400" fill="none" stroke="#3c3c3c" stroke-width="1.500" stroke-linecap="round"/><path d="M11.500 2.600c-.800 1.100-.600 2.200.500 2.800 1.300.700 2.500.200 3.400-.800" fill="none" stroke="#3c3c3c" stroke-width="1.500" stroke-linecap="round"/><path d="M17.600 10.300c-1.200-.500-2.300-.300-2.900.800-.500 1 0 2 1 2.500" fill="none" stroke="#3c3c3c" stroke-width="1.500" stroke-linecap="round"/></svg>
<div id="t48" class="t" style="left:1659.00px;top:116.73px;font-size:15.2px;color:#dadada;letter-spacing:-0.280px;">Booking.com</div>
<svg class="abs" style="left:1864px;top:119px;" width="13" height="12" viewBox="0 0 13 12" ><path d="M1.300 1.500L5.700 6L1.300 10.500M7 1.500L11.400 6L7 10.500" fill="none" stroke="#dcdcdc" stroke-width="1.600" stroke-linecap="round" stroke-linejoin="round"/></svg>
<div class="abs" style="left:956px;top:151px;width:954px;height:869px;background:#1f1f1f;"></div>
<div class="abs" style="left:986px;top:151px;width:1px;height:869px;background:#444;"></div>
<div class="abs" style="left:1805px;top:151px;width:1px;height:869px;background:#444;"></div>
<div class="abs" style="left:1312.3px;top:151px;width:1.8px;height:2.6px;background:#e8e8e8;"></div>
<div class="abs" style="left:1495px;top:151px;width:1.8px;height:2.6px;background:#e8e8e8;"></div>
<div class="abs" style="left:1567.6px;top:151px;width:1.8px;height:2.6px;background:#e8e8e8;"></div>
<div id="t49" class="t" style="left:1022.30px;top:163.07px;font-size:20px;color:#fff;transform-origin:0 0;transform:scaleX(0.9566);">la cámara</div>
<div id="t50" class="t" style="left:1022.30px;top:215.37px;font-size:20px;color:#fff;letter-spacing:0.108px;">Configúralo en: No configurado</div>
<div id="t51" class="t" style="left:1022.30px;top:267.37px;font-size:20px;color:#fff;letter-spacing:-0.095px;">Y trata de comprobar si las aplicaciones de terceros están bloqueando</div>
<div id="t52" class="t" style="left:1022.30px;top:318.97px;font-size:20px;color:#fff;letter-spacing:-0.020px;">Y si probaste todos los métodos anteriores pero aún no funciona, entonces intenta</div>
<div id="t53" class="t" style="left:1022.30px;top:350.97px;font-size:20px;color:#fff;letter-spacing:-0.111px;">restablecer los valores incorrectos del registro (Solo haz esto si te sientes cómodo</div>
<div id="t54" class="t" style="left:1022.30px;top:383.37px;font-size:20px;color:#fff;letter-spacing:0.136px;">editando el registro)</div>
<div id="t55" class="t" style="left:1022.30px;top:435.37px;font-size:20px;color:#fff;letter-spacing:-0.245px;">Presiona Win + R</div>
<div id="t56" class="t" style="left:1022.30px;top:487.07px;font-size:20px;color:#fff;transform-origin:0 0;transform:scaleX(1.0217);">Tipo</div>
<div id="t57" class="t" style="left:1022.30px;top:657.07px;font-size:20px;color:#fff;transform-origin:0 0;transform:scaleX(0.9322);">Cámara:</div>
<div id="t58" class="t" style="left:1022.30px;top:826.27px;font-size:20px;color:#fff;letter-spacing:-0.343px;">Elimina la carpeta Cámara si existe.</div>
<div id="t59" class="t" style="left:1022.30px;top:878.07px;font-size:20px;color:#fff;transform-origin:0 0;transform:scaleX(1.0281);">Micrófono:</div>
<div class="abs" style="left:1022px;top:542px;width:748px;height:87px;background:#1f1f1f;border:2px solid #3d3d3d;border-radius:8px;"></div>
<div class="abs" style="left:1024px;top:544px;width:744px;height:38px;background:#2f2f2f;border-radius:6px 6px 0 0;"></div>
<div class="abs" style="left:1024px;top:582px;width:744px;height:2px;background:#3d3d3d;"></div>
<div class="abs" style="left:1664px;top:546px;width:102.5px;height:33px;background:#1f1f1f;border:1px solid #e2e2e2;border-radius:4.500px;"></div>
<svg class="abs" style="left:1679.5px;top:555.5px;" width="13" height="15" viewBox="0 0 13 15" ><path d="M2.200 3.200V11.600Q2.200 13.300 3.900 13.300H8.800" fill="none" stroke="#9fb6d6" stroke-width="1.300"/><rect x="3.600" y="1" width="7.600" height="10.400" rx="1.700" fill="none" stroke="#fff" stroke-width="1.700"/></svg>
<div id="t60" class="t" style="left:1699.30px;top:555.44px;font-size:17.2px;color:#fff;font-weight:bold;letter-spacing:-0.408px;">Copiar</div>
<div id="t61" class="t" style="left:1034.00px;top:598.89px;font-size:16.05px;color:#f2f2f2;font-family:'Liberation Mono',monospace;letter-spacing:-0.057px;">regedit</div>
<div class="abs" style="left:1022px;top:712px;width:748px;height:86px;background:#1f1f1f;border:2px solid #3d3d3d;border-radius:8px;"></div>
<div class="abs" style="left:1024px;top:714px;width:744px;height:38px;background:#2f2f2f;border-radius:6px 6px 0 0;"></div>
<div class="abs" style="left:1024px;top:752px;width:744px;height:2px;background:#3d3d3d;"></div>
<div id="t62" class="t" style="left:1034.00px;top:724.75px;font-size:19.2px;color:#fff;transform-origin:0 0;transform:scaleX(0.9319);">JSON</div>
<div class="abs" style="left:1664px;top:716px;width:102.5px;height:33px;background:#1f1f1f;border:1px solid #e2e2e2;border-radius:4.500px;"></div>
<svg class="abs" style="left:1679.5px;top:725.5px;" width="13" height="15" viewBox="0 0 13 15" ><path d="M2.200 3.200V11.600Q2.200 13.300 3.900 13.300H8.800" fill="none" stroke="#9fb6d6" stroke-width="1.300"/><rect x="3.600" y="1" width="7.600" height="10.400" rx="1.700" fill="none" stroke="#fff" stroke-width="1.700"/></svg>
<div id="t63" class="t" style="left:1699.30px;top:725.44px;font-size:17.2px;color:#fff;font-weight:bold;letter-spacing:-0.408px;">Copiar</div>
<div id="t64" class="t" style="left:1034.00px;top:768.89px;font-size:16.05px;color:#f2f2f2;font-family:'Liberation Mono',monospace;letter-spacing:0.003px;">HKEY_LOCAL_MACHINE\SOFTWARE\Policies\Microsoft\Windows\Camera</div>
<div class="abs" style="left:1022px;top:933px;width:748px;height:87px;background:#1f1f1f;border:2px solid #3d3d3d;border-radius:8px;"></div>
<div class="abs" style="left:1024px;top:935px;width:744px;height:38px;background:#2f2f2f;border-radius:6px 6px 0 0;"></div>
<div class="abs" style="left:1024px;top:973px;width:744px;height:2px;background:#3d3d3d;"></div>
<div id="t65" class="t" style="left:1034.00px;top:945.75px;font-size:19.2px;color:#fff;transform-origin:0 0;transform:scaleX(0.9699);">YAML</div>
<div class="abs" style="left:1664px;top:937px;width:102.5px;height:33px;background:#1f1f1f;border:1px solid #e2e2e2;border-radius:4.500px;"></div>
<svg class="abs" style="left:1679.5px;top:946.5px;" width="13" height="15" viewBox="0 0 13 15" ><path d="M2.200 3.200V11.600Q2.200 13.300 3.900 13.300H8.800" fill="none" stroke="#9fb6d6" stroke-width="1.300"/><rect x="3.600" y="1" width="7.600" height="10.400" rx="1.700" fill="none" stroke="#fff" stroke-width="1.700"/></svg>
<div id="t66" class="t" style="left:1699.30px;top:946.44px;font-size:17.2px;color:#fff;font-weight:bold;letter-spacing:-0.408px;">Copiar</div>
<div id="t67" class="t" style="left:1034.00px;top:989.89px;font-size:16.05px;color:#d69a72;font-family:'Liberation Mono',monospace;letter-spacing:0.010px;">HKEY_LOCAL_MACHINE\SOFTWARE\Policies\Microsoft\Windows\AppPrivacy</div>
<div class="abs" style="left:1836px;top:151px;width:19px;height:869px;background:#2c2c2c;"></div>
<svg class="abs" style="left:1839px;top:156.8px;" width="13" height="10" viewBox="0 0 13 10" ><path d="M6.500 .500Q7.100 .500 7.600 1.100L12.400 7.800Q13 9.600 11.500 9.600H1.500Q0 9.600 .600 7.800L5.400 1.100Q5.900 .500 6.500 .500Z" fill="#a8a8a8"/></svg>
<svg class="abs" style="left:1839px;top:1004.6px;" width="13" height="10" viewBox="0 0 13 10" ><path d="M6.500 9.500Q7.100 9.500 7.600 8.900L12.400 2.200Q13 .400 11.500 .400H1.500Q0 .400 .600 2.200L5.400 8.900Q5.900 9.500 6.500 9.500Z" fill="#a8a8a8"/></svg>
<div class="abs" style="left:1840px;top:657px;width:10.7px;height:105.5px;background:#9e9e9e;border-radius:5.300px;"></div>
<div class="abs" style="left:1855px;top:151px;width:55px;height:869px;background:#333;"></div>
<svg class="abs" style="left:1874px;top:353px;" width="23" height="23" viewBox="0 0 23 23" ><g fill="none" stroke="#f0f0f0" stroke-width="1.600" stroke-linecap="round" stroke-linejoin="round"><path d="M7.200 19.700H1.800V7.100L11 1.300L20.200 7.100V10.500"/><circle cx="12.300" cy="13.300" r="4.300"/><path d="M15.500 16.600L20.600 21.700" stroke-width="1.900"/></g></svg>
<svg class="abs" style="left:1872px;top:419px;" width="26" height="23" viewBox="0 0 26 23" ><defs><linearGradient id="cb" x1="0" y1="0" x2="1" y2="1"><stop offset="0" stop-color="#1f8fff"/><stop offset="1" stop-color="#0b40e8"/></linearGradient></defs><path d="M2.800 0.500H23.200Q25.200 0.500 25.200 2.500V15.500Q25.200 17.500 23.200 17.500H6.500L1 22.300V2.500Q1 .500 2.800 .500Z" fill="url(#cb)"/><path d="M13 5.600Q13.300 8.700 16.400 9Q13.300 9.300 13 12.400Q12.700 9.300 9.600 9Q12.700 8.700 13 5.600Z" fill="#fff" stroke="#fff" stroke-width=".5"/><path d="M5.600 7.300L6.500 9L5.600 10.700L4.700 9Z" fill="#fff"/><path d="M20.400 7.300L21.300 9L20.400 10.700L19.500 9Z" fill="#fff"/></svg>
<svg class="abs" style="left:1873.5px;top:482px;" width="23" height="24" viewBox="0 0 23 24" ><g fill="none" stroke="#f0f0f0" stroke-width="1.600" stroke-linejoin="round" stroke-linecap="round"><path d="M17.800 9.500H20Q21.800 9.500 21.800 11.300V20Q21.800 22 19.800 22"/><path d="M3.200 1.200H15.800Q17.800 1.200 17.800 3.200V20Q17.800 22 19.800 22H3.200Q1.200 22 1.200 20V3.200Q1.200 1.200 3.200 1.200Z"/><path d="M4.700 5.800h9.600M4.700 9.600h9.600M11.500 14h2.800M11.500 17.600h2.800"/><rect x="4.700" y="13.500" width="3.800" height="4.400"/></g></svg>
<svg class="abs" style="left:1873.5px;top:546px;" width="24" height="26" viewBox="0 0 24 26" ><g fill="none" stroke="#f0f0f0" stroke-width="1.600" stroke-linejoin="round" stroke-linecap="round"><path d="M18.800 15.500V21Q18.800 24.300 15.500 24.300H4.800Q1.500 24.300 1.500 21V6Q1.500 2.700 4.800 2.700H15Q16.800 2.700 17.600 3.500"/><path d="M5.200 2.700V1.200H14.800"/><path d="M9.500 17.800L10.500 13.800L19.500 4.800Q20.800 3.700 22 4.900Q23.100 6.100 22 7.300L13 16.300Z"/></g></svg>
<svg class="abs" style="left:1872px;top:614px;" width="26" height="20" viewBox="0 0 26 20" ><g fill="none" stroke="#f0f0f0" stroke-width="1.600" stroke-linejoin="round" stroke-linecap="round"><path d="M7.300 1.500H18.700Q21 1.500 21.800 3.800L24.600 14.300Q25.300 17.800 22.300 18.300Q20.400 18.500 19.300 16.800L17.300 13.500H8.700L6.700 16.800Q5.600 18.500 3.700 18.300Q.700 17.800 1.400 14.300L4.200 3.800Q5 1.500 7.300 1.500Z"/><path d="M8.800 5.300v4.200M6.700 7.400h4.200" stroke-width="1.400"/></g><circle cx="17.300" cy="5.500" r=".9" fill="#f0f0f0"/><circle cx="19.300" cy="7.500" r=".9" fill="#f0f0f0"/><circle cx="15.300" cy="7.500" r=".9" fill="#f0f0f0"/><circle cx="17.300" cy="9.500" r=".9" fill="#f0f0f0"/></svg>
<svg class="abs" style="left:1874px;top:678px;" width="22" height="22" viewBox="0 0 22 22" ><g fill="none" stroke="#f0f0f0" stroke-width="1.700" stroke-linejoin="round" stroke-linecap="round"><path d="M3.200 1.500L20.500 18.800L18.800 20.500L1.500 3.200V1.500Z"/><path d="M16 1.400L20.600 6L6 20.600L1.400 16Z"/><path d="M13.500 3.900l1.800 1.800M10.700 6.700l1.800 1.800M5 12.400l1.800 1.800" stroke-width="1.300"/></g></svg>
<div class="abs" style="left:1870px;top:739.5px;width:30px;height:3px;background:#555;border-radius:1.500px;"></div>
<svg class="abs" style="left:1875px;top:781px;" width="20" height="22" viewBox="0 0 20 22" ><g fill="none" stroke="#f0f0f0" stroke-width="1.700" stroke-linecap="round"><path d="M1.200 4.300H9.500M13.300 4.300H18.800M13.300 1.300V7.300"/><path d="M1.200 11H5.700M9.500 11H18.800M5.700 8V14"/><path d="M1.200 17.700H11.500M15.300 17.700H18.800M11.500 14.700V20.700"/></g></svg>
</div>
<div class="abs" style="left:0;top:0;width:1910px;height:1px;background:#8c8c8c"></div>
<div class="abs" style="left:0;top:1018px;width:1910px;height:1px;background:rgba(255,255,255,.07)"></div>
<div class="abs" style="left:0;top:1019px;width:1910px;height:1px;background:#686868"></div>
</body>
</html>
